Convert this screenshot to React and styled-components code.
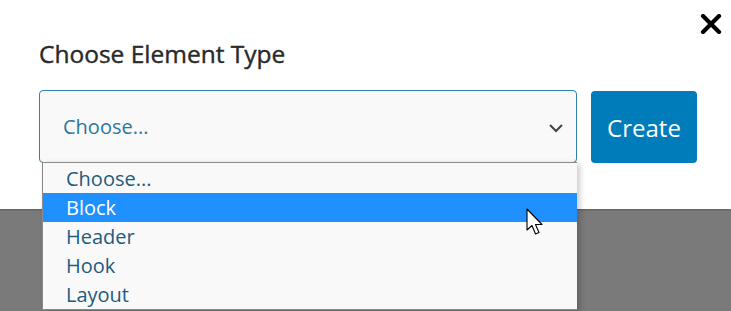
import React from 'react';
import styled, { createGlobalStyle } from 'styled-components';

const GlobalStyle = createGlobalStyle`
  html, body {
    margin: 0;
    padding: 0;
    background: #7a7a7a;
    font-family: "Open Sans", "Noto Sans", sans-serif;
  }
`;

const options = ['Choose...', 'Block', 'Header', 'Hook', 'Layout'];

const App = () => {
    return (
        <>
            <GlobalStyle />
            <Page>
                <Modal>
                    <CloseButton aria-label="Close">
                        <svg width="22" height="20" viewBox="0 0 22 20">
                            <path d="M3 2 L19 18 M19 2 L3 18" stroke="#000" strokeWidth="4.2" strokeLinecap="round" />
                        </svg>
                    </CloseButton>

                    <Title>Choose Element Type</Title>

                    <Row>
                        <SelectField>
                            <span>Choose...</span>
                            <svg width="16" height="10" viewBox="0 0 16 10">
                                <path d="M2 2 L8 8 L14 2" stroke="#444" strokeWidth="2" fill="none" />
                            </svg>
                        </SelectField>
                        <CreateButton>Create</CreateButton>
                    </Row>

                    {/* Open dropdown list */}
                    <OptionList>
                        {options.map((opt) => (
                            <Option key={opt} $active={opt === 'Block'}>{opt}</Option>
                        ))}
                    </OptionList>

                    <Cursor width="20" height="30" viewBox="0 0 20 30">
                        <path
                            d="M1 1 L1 22 L6 17.5 L9.5 26 L13 24.5 L9.5 16.5 L16 16.5 Z"
                            fill="#fff"
                            stroke="#000"
                            strokeWidth="1.1"
                            strokeLinejoin="round"
                        />
                    </Cursor>
                </Modal>
            </Page>
        </>
    );
};

const Page = styled.div`
  width: 731px;
  height: 311px;
  position: relative;
  overflow: hidden;
`;

const Modal = styled.div`
  position: relative;
  background: #fff;
  height: 209px;
  padding: 38px 34px 0 39px;
  box-sizing: border-box;
  box-shadow: 0 1px 2px rgba(0, 0, 0, 0.25);
`;

const CloseButton = styled.button`
  position: absolute;
  top: 14px;
  right: 9px;
  background: none;
  border: 0;
  padding: 0;
  display: flex;
  cursor: pointer;
`;

const Title = styled.h2`
  margin: 0 0 20px 0;
  font-size: 24.5px;
  font-weight: 400;
  -webkit-text-stroke: 0.4px #2a2a2a;
  color: #2a2a2a;
  line-height: 32px;
`;

const Row = styled.div`
  display: flex;
  gap: 14px;
  align-items: stretch;
`;

const SelectField = styled.div`
  width: 538px;
  height: 73px;
  box-sizing: border-box;
  border: 1px solid #2c82b5;
  border-radius: 4px;
  background: #f9f9f9;
  display: flex;
  align-items: center;
  justify-content: space-between;
  padding: 0 12px 0 23px;
  font-size: 20px;
  color: #2b77a0;

  svg {
    margin-top: 2px;
  }
`;

const CreateButton = styled.button`
  width: 106px;
  height: 72px;
  margin-top: 1px;
  border: 0;
  border-radius: 4px;
  background: #007cba;
  color: #fff;
  font-family: inherit;
  font-size: 24px;
  cursor: pointer;
`;

const OptionList = styled.ul`
  position: absolute;
  left: 42px;
  top: 162px;
  width: 535px;
  margin: 0;
  padding: 1px 0 0;
  list-style: none;
  background: #f9f9f9;
  border: 1px solid #8a8a8a;
  border-right: 0;
  box-sizing: border-box;
  box-shadow: 3px 2px 6px rgba(0, 0, 0, 0.2);
  z-index: 2;
`;

const Option = styled.li`
  height: 29px;
  line-height: 29px;
  padding-left: 23px;
  font-size: 20px;
  color: ${(p) => (p.$active ? '#fff' : '#1e5b7e')};
  background: ${(p) => (p.$active ? '#1e90ff' : 'transparent')};
`;

const Cursor = styled.svg`
  position: absolute;
  left: 526px;
  top: 208px;
  z-index: 3;
`;

export default App;
